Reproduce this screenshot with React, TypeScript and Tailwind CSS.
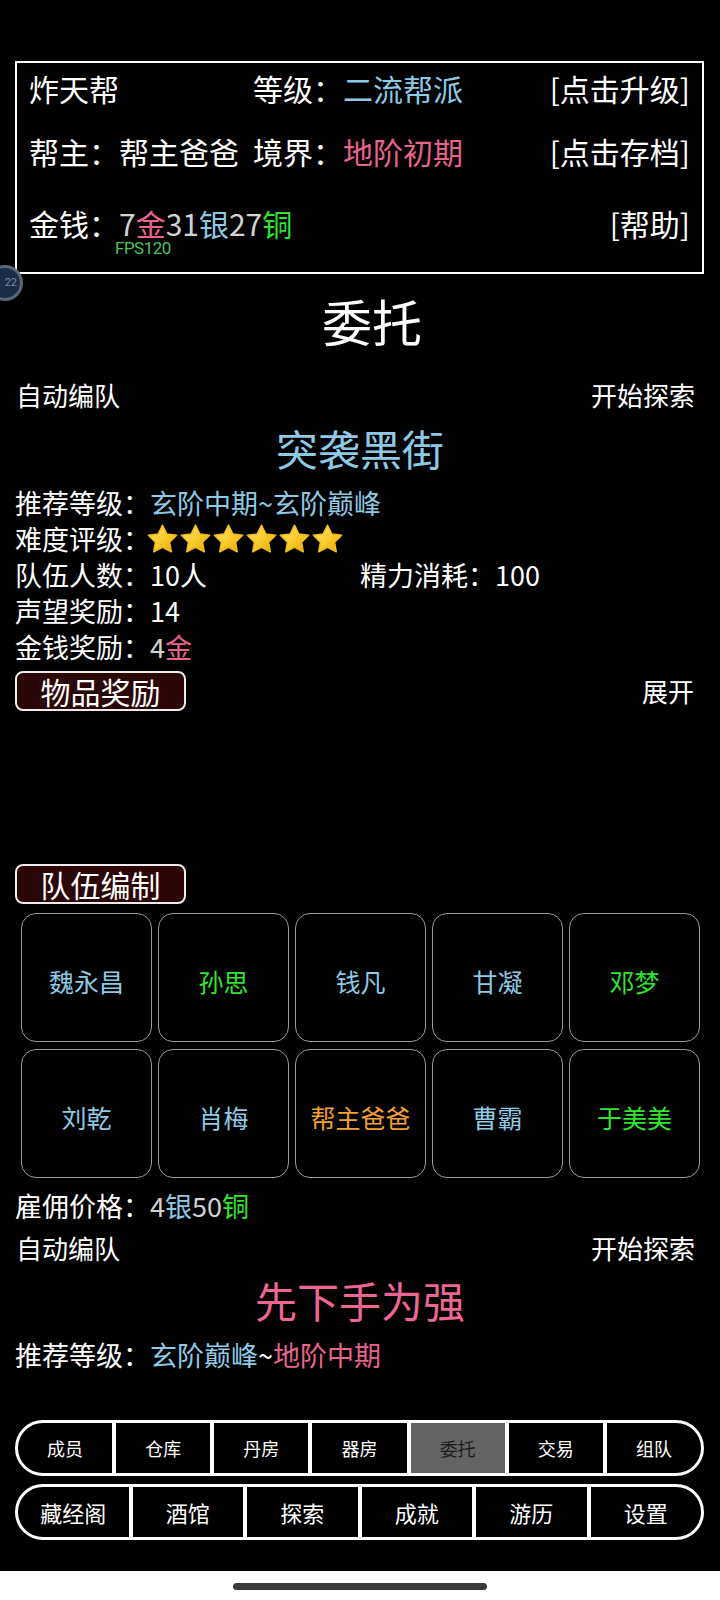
const blue = "text-[#8ecae6]";
const pink = "text-[#e8648c]";
const green = "text-[#2ee62e]";
const gray = "text-[#d2d2d2]";

const members = [
    { name: "魏永昌", color: "text-[#8ecae6]" },
    { name: "孙思", color: "text-[#2ee62e]" },
    { name: "钱凡", color: "text-[#8ecae6]" },
    { name: "甘凝", color: "text-[#8ecae6]" },
    { name: "邓梦", color: "text-[#2ee62e]" },
    { name: "刘乾", color: "text-[#8ecae6]" },
    { name: "肖梅", color: "text-[#8ecae6]" },
    { name: "帮主爸爸", color: "text-[#f5a030]" },
    { name: "曹霸", color: "text-[#8ecae6]" },
    { name: "于美美", color: "text-[#2ee62e]" },
];

const navTop = ["成员", "仓库", "丹房", "器房", "委托", "交易", "组队"];
const navBottom = ["藏经阁", "酒馆", "探索", "成就", "游历", "设置"];

function Star() {
    return (
        <svg width="31" height="29" viewBox="1.4 1 21.2 20.4">
            <defs>
                <linearGradient id="starGold" x1="0" y1="0" x2="1" y2="1">
                    <stop offset="0%" stopColor="#ffe873" />
                    <stop offset="55%" stopColor="#f8c92a" />
                    <stop offset="100%" stopColor="#e5a500" />
                </linearGradient>
            </defs>
            <polygon
                points="12,1.8 15.1,8 22,8.9 17,13.8 18.2,20.6 12,17.4 5.8,20.6 7,13.8 2,8.9 8.9,8"
                fill="url(#starGold)"
                stroke="#f3bd1c"
                strokeWidth="1"
                strokeLinejoin="round"
            />
        </svg>
    );
}

function TagButton({ label }: { label: string }) {
    return (
        <div className="h-[40px] w-[171px] flex items-center justify-center rounded-[8px] border-2 border-[#ececec] bg-[#2b0707] text-[30px] leading-none text-white">
            {label}
        </div>
    );
}

function InfoRow({ children }: { children: React.ReactNode }) {
    return <div className="h-[36px] flex items-center pl-[15px] text-[27px] leading-none text-white">{children}</div>;
}

function ActionRow() {
    return (
        <div className="h-[36px] flex items-center justify-between pl-[16px] pr-[25px] text-[26px] leading-none text-white">
            <span>自动编队</span>
            <span>开始探索</span>
        </div>
    );
}

export default function App() {
    return (
        <div className="relative w-[720px] h-[1600px] bg-black flex flex-col overflow-hidden font-['Noto_Sans_CJK_SC','Noto_Sans',sans-serif]">
            {/* header panel */}
            <div className="mt-[61px] ml-[15px] mr-[16px] h-[213px] border-2 border-white pl-[12px] pr-[12px] pt-[4px] flex flex-col text-[30px] leading-none text-white">
                <div className="h-[41px] grid grid-cols-[224px_1fr_auto] items-center">
                    <span>炸天帮</span>
                    <span>等级：<span className={blue}>二流帮派</span></span>
                    <span>[点击升级]</span>
                </div>
                <div className="mt-[22px] h-[41px] grid grid-cols-[224px_1fr_auto] items-center">
                    <span>帮主：帮主爸爸</span>
                    <span>境界：<span className={pink}>地阶初期</span></span>
                    <span>[点击存档]</span>
                </div>
                <div className="mt-[31px] h-[41px] flex items-center justify-between">
                    <span>
                        金钱：<span className={gray}>7</span><span className={pink}>金</span>
                        <span className={gray}>31</span><span className={blue}>银</span>
                        <span className={gray}>27</span><span className={green}>铜</span>
                    </span>
                    <span>[帮助]</span>
                </div>
            </div>

            {/* debug overlays */}
            <div className="absolute left-[115px] top-[239px] text-[17px] leading-[18px] tracking-[-0.5px] text-[#4cc35a] font-['Roboto',sans-serif]">
                FPS120
            </div>
            <div className="absolute left-[-13px] top-[265px] w-[36px] h-[36px] rounded-full border-[3px] border-[#5d6675] bg-[#1b2c47] flex items-center justify-end pr-[3px] text-[11px] text-[#7d8896] font-['Roboto',sans-serif]">
                22
            </div>

            <div className="mt-[16px] h-[60px] flex items-center justify-center pl-[24px] text-[50px] leading-none text-white">委托</div>

            <div className="mt-[27px]">
                <ActionRow />
            </div>

            <div className={`mt-[9px] h-[52px] flex items-center justify-center text-[42px] leading-none ${blue}`}>突袭黑街</div>

            <div className="mt-[10px] flex flex-col">
                <InfoRow>
                    推荐等级：<span className={blue}>玄阶中期~玄阶巅峰</span>
                </InfoRow>
                <InfoRow>
                    难度评级：
                    <span className="flex gap-[2px] ml-[-3px]">
                        {[0, 1, 2, 3, 4, 5].map((i) => (
                            <Star key={i} />
                        ))}
                    </span>
                </InfoRow>
                <div className="h-[36px] grid grid-cols-[345px_1fr] items-center pl-[15px] text-[27px] leading-none text-white">
                    <span>队伍人数：10人</span>
                    <span>精力消耗：100</span>
                </div>
                <InfoRow>声望奖励：14</InfoRow>
                <InfoRow>
                    金钱奖励：<span className={gray}>4</span><span className={pink}>金</span>
                </InfoRow>
            </div>

            <div className="mt-[7px] flex items-center justify-between pl-[15px] pr-[26px]">
                <TagButton label="物品奖励" />
                <span className="text-[26px] leading-none text-white">展开</span>
            </div>

            <div className="mt-[153px] pl-[15px]">
                <TagButton label="队伍编制" />
            </div>

            <div className="mt-[9px] ml-[21px] w-[679px] grid grid-cols-5 gap-x-[6px] gap-y-[7px]">
                {members.map((m) => (
                    <div
                        key={m.name}
                        className={`h-[129px] rounded-[15px] border border-[#9a9a9a] flex items-center justify-center pt-[8px] text-[25px] leading-none ${m.color}`}
                    >
                        {m.name}
                    </div>
                ))}
            </div>

            <div className="mt-[9px]">
                <InfoRow>
                    雇佣价格：<span className={gray}>4</span><span className={blue}>银</span>
                    <span className={gray}>50</span><span className={green}>铜</span>
                </InfoRow>
            </div>

            <div className="mt-[7px]">
                <ActionRow />
            </div>

            <div className="mt-[8px] h-[52px] flex items-center justify-center text-[42px] leading-none text-[#ee6692]">先下手为强</div>

            <div className="mt-[10px]">
                <InfoRow>
                    推荐等级：<span className={blue}>玄阶巅峰</span>~<span className={pink}>地阶中期</span>
                </InfoRow>
            </div>

            {/* bottom navigation */}
            <div className="mt-[48px] ml-[15px] mr-[16px] h-[56px] flex rounded-full border-[3px] border-white overflow-hidden">
                {navTop.map((label, i) => (
                    <div
                        key={label}
                        className={`flex-1 flex items-center justify-center text-[18px] leading-none ${i > 0 ? "border-l-4 border-white" : ""} ${label === "委托" ? "bg-[#646464] text-[#1e1e1e]" : "text-white"}`}
                    >
                        {label}
                    </div>
                ))}
            </div>
            <div className="mt-[8px] ml-[15px] mr-[16px] h-[56px] flex rounded-full border-[3px] border-white overflow-hidden">
                {navBottom.map((label, i) => (
                    <div
                        key={label}
                        className={`flex-1 flex items-center justify-center text-[22px] leading-none text-white ${i > 0 ? "border-l-4 border-white" : ""}`}
                    >
                        {label}
                    </div>
                ))}
            </div>

            <div className="mt-[31px] flex-1 bg-white flex justify-center pt-[12px]">
                <div className="w-[254px] h-[7px] rounded-full bg-[#3a3a3a]" />
            </div>
        </div>
    );
}
